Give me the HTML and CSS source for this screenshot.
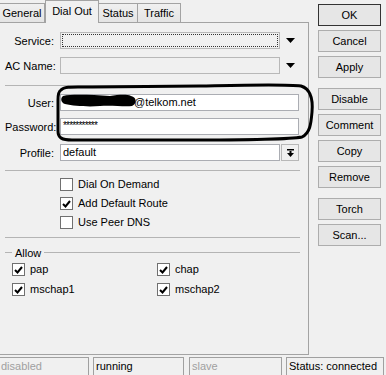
FILE: index.html
```html
<!DOCTYPE html>
<html>
<head>
<meta charset="utf-8">
<link rel="stylesheet" href="styles.css">
</head>
<body>
<div class="window">
  <div class="main">
    <div class="left">
      <div class="tabs">
        <div class="tab w-general">General</div>
        <div class="tab active w-dial">Dial Out</div>
        <div class="tab w-status">Status</div>
        <div class="tab w-traffic">Traffic</div>
      </div>
      <div class="panel">
        <div class="row mt0">
          <span class="label">Service:</span>
          <div class="input gray focus w-short"><div class="focusring"></div></div>
          <svg class="drop" width="9" height="5" viewBox="0 0 9 5"><polygon points="0,0 9,0 4.5,5" fill="#000"/></svg>
        </div>
        <div class="row mt8">
          <span class="label">AC Name:</span>
          <div class="input gray w-short"></div>
          <svg class="drop" width="9" height="5" viewBox="0 0 9 5"><polygon points="0,0 9,0 4.5,5" fill="#000"/></svg>
        </div>
        <div class="sep mt11"></div>
        <div class="row mt8">
          <span class="label">User:</span>
          <div class="input w-long"><span class="user">@telkom.net</span></div>
        </div>
        <div class="row mt7">
          <span class="label">Password:</span>
          <div class="input w-long"><span class="stars">***********</span></div>
        </div>
        <div class="row mt9">
          <span class="label">Profile:</span>
          <div class="input w-short">default</div>
          <div class="pbtn"><svg width="7" height="8" viewBox="0 0 7 8"><rect x="0" y="0" width="7" height="1.5" fill="#000"/><rect x="2.5" y="2" width="2" height="2.5" fill="#000"/><polygon points="0,4 7,4 3.5,8" fill="#000"/></svg></div>
        </div>
        <div class="sep mt9"></div>
        <div class="checks">
          <label class="cb"><span class="box"></span>Dial On Demand</label>
          <label class="cb"><span class="box checked"><svg width="9" height="8" viewBox="0 0 9 8"><path d="M1 4 L3.5 6.5 L8 1" stroke="#000" stroke-width="2" fill="none"/></svg></span>Add Default Route</label>
          <label class="cb"><span class="box"></span>Use Peer DNS</label>
        </div>
        <div class="sep mt8"></div>
        <div class="legend">Allow</div>
        <div class="allow">
          <label class="cb"><span class="box checked"><svg width="9" height="8" viewBox="0 0 9 8"><path d="M1 4 L3.5 6.5 L8 1" stroke="#000" stroke-width="2" fill="none"/></svg></span>pap</label>
          <label class="cb"><span class="box checked"><svg width="9" height="8" viewBox="0 0 9 8"><path d="M1 4 L3.5 6.5 L8 1" stroke="#000" stroke-width="2" fill="none"/></svg></span>chap</label>
          <label class="cb"><span class="box checked"><svg width="9" height="8" viewBox="0 0 9 8"><path d="M1 4 L3.5 6.5 L8 1" stroke="#000" stroke-width="2" fill="none"/></svg></span>mschap1</label>
          <label class="cb"><span class="box checked"><svg width="9" height="8" viewBox="0 0 9 8"><path d="M1 4 L3.5 6.5 L8 1" stroke="#000" stroke-width="2" fill="none"/></svg></span>mschap2</label>
        </div>
      </div>
    </div>
    <div class="buttons">
      <div class="btn default">OK</div>
      <div class="btn">Cancel</div>
      <div class="btn">Apply</div>
      <div class="btn gap">Disable</div>
      <div class="btn">Comment</div>
      <div class="btn">Copy</div>
      <div class="btn">Remove</div>
      <div class="btn gap">Torch</div>
      <div class="btn">Scan...</div>
    </div>
  </div>
  <div class="status">
    <div class="seg s1 dim">disabled</div>
    <div class="seg s2">running</div>
    <div class="seg s3 dim">slave</div>
    <div class="seg s4">Status: connected</div>
  </div>
</div>
<svg class="overlay" width="386" height="375" viewBox="0 0 386 375">
  <path d="M63 96 C72 94 92 95 110 96 C118 95 126 94 131 96 C137 97 137 104 132 106 C124 107 112 105 100 106 C88 107 74 106 65 104 C61 103 60 98 63 96 Z" fill="#000"/>
  <path d="M61 90 C64 86 74 87 92 87 L200 86 C250 85 286 84 301 86 C311 89 313 100 312 112 C311 124 310 133 302 137 C282 141 200 140 130 140 L72 140 C62 140 58 138 58 131 L58 100 C58 94 59 91 61 90 Z" fill="none" stroke="#000" stroke-width="3" stroke-linejoin="round"/>
</svg>
</body>
</html>
```

FILE: styles.css
```css
* { box-sizing: border-box; }
body {
  margin: 0;
  width: 386px;
  height: 375px;
  overflow: hidden;
  position: relative;
  background: #f0f0f0;
  font-family: "Liberation Sans", Arial, sans-serif;
  font-size: 11px;
  color: #000;
}
.window { display: flex; flex-direction: column; height: 375px; }
.main { display: flex; height: 357px; }
.left { width: 309px; display: flex; flex-direction: column; }
.tabs { display: flex; align-items: flex-end; height: 22px; }
.tab {
  height: 19px;
  line-height: 18px;
  text-align: center;
  border: 1px solid #a3a3a3;
  border-bottom: none;
  background: linear-gradient(#f0f0f0, #e4e4e4);
}
.tab.active {
  height: 23px;
  line-height: 20px;
  margin-bottom: -1px;
  background: #f0f0f0;
  position: relative;
  z-index: 1;
  border-color: #a3a3a3;
}
.w-general { width: 46px; margin-left: -1px; }
.w-dial { width: 54px; }
.w-status { width: 39px; border-left: none; }
.w-traffic { width: 43px; border-left: none; }
.panel {
  flex: 1;
  border-top: 1px solid #a3a3a3;
  border-right: 1px solid #a3a3a3;
  border-bottom: 1px solid #a3a3a3;
  padding: 9px 8px 0 5px;
  display: flex;
  flex-direction: column;
  margin-bottom: 2px;
}
.row { display: flex; align-items: center; height: 17px; }
.label { width: 55px; text-align: right; padding-right: 6px; white-space: nowrap; }
.input {
  height: 17px;
  border: 1px solid #abadb3;
  background: #fff;
  line-height: 15px;
  padding-left: 2px;
  position: relative;
  white-space: nowrap;
  overflow: hidden;
}
.input.gray { background: #f0f0f0; border-color: #b8b8b8; }
.focusring { position: absolute; left: 1px; top: 1px; right: 1px; bottom: 1px; border: 1px dotted #333; }
.w-short { width: 220px; }
.w-long { width: 239px; }
.drop { margin-left: 6px; }
.pbtn {
  width: 18px;
  height: 17px;
  margin-left: 1px;
  border: 1px solid #b8b8b8;
  background: #f0f0f0;
  display: flex;
  align-items: center;
  justify-content: center;
}
.user { padding-left: 71px; }
.stars { font-size: 10px; letter-spacing: -0.8px; position: relative; top: -1px; }
.sep { height: 1px; background: #b4b4b4; }
.mt0 { margin-top: 0; }
.mt7 { margin-top: 7px; }
.mt8 { margin-top: 8px; }
.mt9 { margin-top: 9px; }
.mt11 { margin-top: 11px; }
.checks { display: flex; flex-direction: column; gap: 6px; margin-top: 7px; padding-left: 55px; }
.cb { display: flex; align-items: center; height: 13px; line-height: 13px; white-space: nowrap; }
.box {
  width: 13px;
  height: 13px;
  border: 1px solid #707070;
  background: #fff;
  margin-right: 5px;
  display: flex;
  align-items: center;
  justify-content: center;
}
.legend { display: flex; align-items: center; height: 13px; margin-top: 8px; }
.legend::before { content: ""; width: 7px; height: 1px; background: #b4b4b4; margin-right: 3px; }
.legend::after { content: ""; flex: 1; height: 1px; background: #b4b4b4; margin-left: 3px; }
.allow {
  display: grid;
  grid-template-columns: 145px 1fr;
  row-gap: 7px;
  margin-top: 4px;
  padding-left: 7px;
}
.buttons {
  display: flex;
  flex-direction: column;
  padding-top: 4px;
  padding-left: 9px;
  gap: 4px;
}
.btn {
  width: 63px;
  height: 22px;
  line-height: 20px;
  text-align: center;
  border: 1px solid #adadad;
  background: #e6e6e6;
}
.btn.default { border-color: #333; }
.btn.gap { margin-top: 6px; }
.status { display: flex; height: 18px; }
.seg {
  height: 18px;
  border: 1px solid #a0a0a0;
  border-bottom: none;
  padding-left: 2px;
  line-height: 17px;
  white-space: nowrap;
}
.dim { color: #a0a0a0; }
.s1 { width: 91px; margin-left: -2px; }
.s2 { width: 91px; margin-left: 4px; }
.s3 { width: 93px; margin-left: 5px; }
.s4 { width: 98px; margin-left: 4px; }
.overlay { position: absolute; left: 0; top: 0; pointer-events: none; }
```
